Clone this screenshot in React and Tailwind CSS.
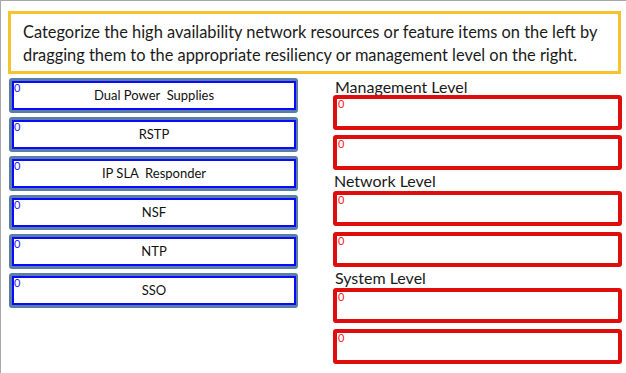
import React from "react";

const items = ["Dual Power  Supplies", "RSTP", "IP SLA  Responder", "NSF", "NTP", "SSO"];

function LeftItem({ label }) {
  return (
    <div className="h-[35px] w-[289px] rounded-[3px] bg-[#5a7ea6] pt-[3px] pb-[3px] pl-[3px] pr-[2px]">
      <div className="relative h-full w-full border-2 border-[#0a0aff] bg-white flex items-center justify-center">
        <span className="absolute left-[0px] top-[-2px] text-[11px] leading-[14px] text-[#1a1aff]">0</span>
        <span className="whitespace-pre text-[13px] text-[#111]">{label}</span>
      </div>
    </div>
  );
}

function RedBox({ className = "" }) {
  return (
    <div className={"relative h-[35px] w-[289px] rounded-[3px] border-[4px] border-[#e00d0d] bg-white " + className}>
      <span className="absolute left-[1px] top-[-2px] text-[11px] leading-[14px] text-[#ff1a1a]">0</span>
    </div>
  );
}

export default function App() {
  return (
    <div
      className="w-[626px] h-[373px] overflow-hidden border-t border-l border-[#a8a8a8] bg-white"
      style={{ fontFamily: "Lato, 'Open Sans', sans-serif" }}
    >
      <div className="ml-[7px] mt-[10px] h-[63px] w-[613px] border-[3px] border-[#f5c32c] pl-[12px] pt-[6px] text-[16.4px] leading-[23px] text-[#1a1a1a] whitespace-nowrap">
        <div>Categorize the high availability network resources or feature items on the left by</div>
        <div>dragging them to the appropriate resiliency or management level on the right.</div>
      </div>
      <div className="mt-[4px] flex">
        <div className="ml-[8px] flex flex-col gap-[4px]">
          {items.map((l) => (
            <LeftItem key={l} label={l} />
          ))}
        </div>
        <div className="ml-[35px] flex flex-col">
          <div className="h-[17px] pl-[2px] text-[16px] leading-[17px] text-[#1a1a1a]">Management Level</div>
          <RedBox />
          <RedBox className="mt-[5px]" />
          <div className="h-[21px] pl-[1px] text-[16px] leading-[22px] text-[#1a1a1a]">Network Level</div>
          <RedBox />
          <RedBox className="mt-[6px]" />
          <div className="h-[21px] pl-[2px] text-[16px] leading-[22px] text-[#1a1a1a]">System Level</div>
          <RedBox />
          <RedBox className="mt-[6px]" />
        </div>
      </div>
    </div>
  );
}
